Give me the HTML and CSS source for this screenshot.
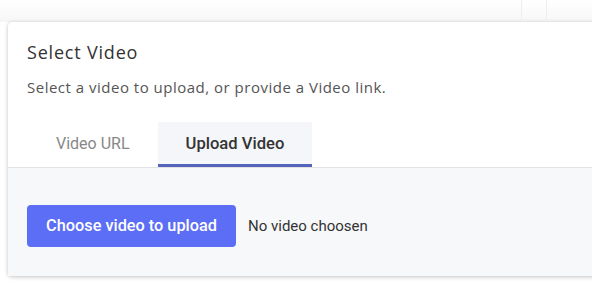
FILE: index.html
```html
<!DOCTYPE html>
<html lang="en">
<head>
  <meta charset="UTF-8" />
  <meta name="viewport" content="width=device-width, initial-scale=1.0">
  <title>Select Video</title>
  <link rel="stylesheet" href="styles.css">
</head>
<body>
  <div class="topbar">
    <span class="topbar-cell"></span>
    <span class="topbar-cell"></span>
  </div>

  <div class="wrap">
    <div class="card">
      <div class="card-head">
        <h2 class="title">Select Video</h2>
        <p class="subtitle">Select a video to upload, or provide a Video link.</p>
      </div>

      <div class="tabs">
        <div class="tab">Video URL</div>
        <div class="tab active">Upload Video</div>
      </div>

      <div class="panel">
        <button class="upload-btn">Choose video to upload</button>
        <span class="file-name">No video choosen</span>
      </div>
    </div>
  </div>
</body>
</html>
```

FILE: styles.css
```css
* { box-sizing: border-box; }
body {
  margin: 0;
  background: #fff;
  font-family: Roboto, Arial, sans-serif;
  overflow: hidden;
  height: 288px;
}
.topbar {
  height: 22px;
  display: flex;
  justify-content: flex-end;
  padding-right: 21px;
  background: linear-gradient(#fff, #f6f6f6);
}
.topbar-cell {
  width: 25px;
  border-left: 1px solid #eee;
}
.wrap {
  padding: 0 0 0 8px;
}
.card {
  width: 620px;
  background: #fff;
  border-radius: 4px 0 0 4px;
  box-shadow: 0 1px 4px rgba(0,0,0,0.22), 0 0 1px rgba(0,0,0,0.15);
}
.card-head {
  padding: 20px 19px 0;
}
.title {
  margin: 0;
  font-family: "Open Sans", sans-serif;
  font-weight: 500;
  font-size: 18px;
  letter-spacing: 0.8px;
  color: #333;
  line-height: 20px;
}
.subtitle {
  margin: 16px 0 0;
  font-family: "Open Sans", sans-serif;
  font-size: 15px;
  letter-spacing: 0.5px;
  color: #555;
  line-height: 18px;
}
.tabs {
  display: flex;
  margin-top: 26px;
  padding-left: 19px;
  border-bottom: 1px solid #e2e2e6;
}
.tab {
  padding: 0 28px 0 29px;
  height: 45px;
  line-height: 44px;
  font-size: 16px;
  color: #888;
  border-bottom: 3px solid transparent;
}
.tab.active {
  color: #333;
  font-weight: 500;
  font-size: 16.6px;
  padding: 0 28px;
  background: #f5f6f9;
  border-bottom-color: #5563b8;
}
.panel {
  background: #f7f8fa;
  height: 108px;
  display: flex;
  align-items: center;
  padding: 7px 19px 0;
  gap: 12px;
}
.upload-btn {
  font-family: Roboto, Arial, sans-serif;
  font-size: 16.3px;
  font-weight: 500;
  color: #fff;
  background: #5b6ef5;
  border: none;
  border-radius: 4px;
  height: 42px;
  width: 209px;
  padding: 0;
}
.file-name {
  font-size: 15px;
  color: #333;
}
```
